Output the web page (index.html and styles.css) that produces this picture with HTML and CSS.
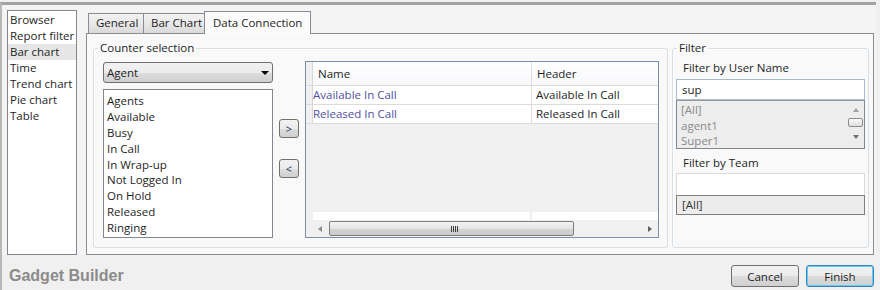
FILE: index.html
```html
<!DOCTYPE html>
<html lang="en">
<head>
    <meta charset="UTF-8">
    <title>Gadget Builder</title>
    <link rel="stylesheet" href="styles.css">
</head>
<body>
    <div class="frame">
        <div class="top">
            <ul class="nav">
                <li>Browser</li>
                <li>Report filter</li>
                <li class="current">Bar chart</li>
                <li>Time</li>
                <li>Trend chart</li>
                <li>Pie chart</li>
                <li>Table</li>
            </ul>
            <div class="tabs">
                <div class="tabstrip">
                    <div class="tab tGeneral">General</div>
                    <div class="tab tBar">Bar Chart</div>
                    <div class="tab tData active">Data Connection</div>
                </div>
                <div class="panel">
                    <fieldset class="group counter">
                        <legend>Counter selection</legend>
                        <div class="counterBody">
                            <div class="pick">
                                <div class="combo">Agent <span class="caret"></span></div>
                                <ul class="listbox">
                                    <li>Agents</li>
                                    <li>Available</li>
                                    <li>Busy</li>
                                    <li>In Call</li>
                                    <li>In Wrap-up</li>
                                    <li>Not Logged In</li>
                                    <li>On Hold</li>
                                    <li>Released</li>
                                    <li>Ringing</li>
                                </ul>
                            </div>
                            <div class="movers">
                                <button class="mv mvAdd">&gt;</button>
                                <button class="mv mvDel">&lt;</button>
                            </div>
                            <div class="grid">
                                <div class="gRow gHead">
                                    <div class="rh"></div>
                                    <div class="c1">Name</div>
                                    <div class="c2">Header</div>
                                </div>
                                <div class="gRow gData">
                                    <div class="rh"></div>
                                    <div class="c1">Available In Call</div>
                                    <div class="c2">Available In Call</div>
                                </div>
                                <div class="gRow gData">
                                    <div class="rh"></div>
                                    <div class="c1">Released In Call</div>
                                    <div class="c2">Released In Call</div>
                                </div>
                                <div class="gEmpty"></div>
                                <div class="gNew">
                                    <div class="c1"></div>
                                    <div class="c2"></div>
                                </div>
                                <div class="hscroll">
                                    <span class="arr arrL"></span>
                                    <div class="thumbTrack">
                                        <div class="hthumb"><span class="grip"></span></div>
                                    </div>
                                    <span class="arr arrR"></span>
                                </div>
                            </div>
                        </div>
                    </fieldset>
                    <fieldset class="group filter">
                        <legend>Filter</legend>
                        <div class="filterBody">
                            <div class="fLabel">Filter by User Name</div>
                            <div class="fInput">sup</div>
                            <div class="fList">
                                <ul>
                                    <li>[All]</li>
                                    <li>agent1</li>
                                    <li>Super1</li>
                                </ul>
                                <div class="vscroll">
                                    <span class="arr arrU"></span>
                                    <span class="vthumb"></span>
                                    <span class="arr arrD"></span>
                                </div>
                            </div>
                            <div class="fLabel fTeam">Filter by Team</div>
                            <div class="fInput fEmpty"></div>
                            <div class="fAll">[All]</div>
                        </div>
                    </fieldset>
                </div>
            </div>
        </div>
        <div class="footer">
            <div class="brand">Gadget Builder</div>
            <div class="actions">
                <button class="btn">Cancel</button>
                <button class="btn btnDefault">Finish</button>
            </div>
        </div>
    </div>
</body>
</html>
```

FILE: styles.css
```css
* {
    box-sizing: border-box;
}
body {
    margin: 0;
    width: 880px;
    height: 290px;
    overflow: hidden;
    background-color: #f0f0f0;
    font-family: "Open Sans", "Noto Sans", sans-serif;
    font-size: 11.5px;
    color: #1e1e1e;
}
ul {
    list-style: none;
    margin: 0;
    padding: 0;
}
.frame {
    width: 876px;
    height: 288px;
    margin-top: 2px;
    border-top: 3px solid #a3a3a3;
    border-left: 2px solid #b8b8b8;
    background-color: #f0f0f0;
    display: flex;
    flex-direction: column;
}
.top {
    display: flex;
    padding: 5px 2px 0 5px;
    background-color: #f4f4f4;
}
.nav {
    width: 70px;
    height: 245px;
    border: 1px solid #828790;
    background-color: #fff;
    padding: 1px 0 0 0;
}
.nav li {
    line-height: 16px;
    height: 16px;
    padding-left: 2px;
    white-space: nowrap;
    overflow: hidden;
}
.nav li.current {
    background-color: #e6e6e6;
}
.tabs {
    margin-left: 9px;
    margin-top: 1px;
    flex: 1;
    display: flex;
    flex-direction: column;
}
.tabstrip {
    display: flex;
    align-items: flex-end;
    height: 22px;
    padding-left: 2px;
}
.tab {
    height: 20px;
    line-height: 18px;
    border: 1px solid #898c95;
    border-bottom: none;
    background: linear-gradient(#f3f3f3, #e8e8e8 50%, #dadada);
    padding-left: 7px;
    margin-right: -1px;
    white-space: nowrap;
    position: relative;
}
.tGeneral { width: 56px; }
.tBar { width: 62px; }
.tData { width: 107px; }
.tab.active {
    height: 23px;
    margin-bottom: -1px;
    background: #fbfbfb;
    z-index: 2;
    line-height: 22px;
    padding-left: 8px;
}
.panel {
    height: 222px;
    border: 1px solid #898c95;
    background-color: #f9f9f9;
    display: flex;
    gap: 4px;
    padding: 6px 4px 0 6px;
}
.group {
    margin: 0;
    padding: 0;
    height: 208px;
    border: 1px solid #d5dfe5;
    border-radius: 3px;
    box-shadow: inset 1px 1px 0 #fff;
}
.group legend {
    margin-left: 4px;
    padding: 0 2px;
    line-height: 16px;
    font-size: 11.5px;
}
.counter {
    width: 575px;
}
.filter {
    width: 197px;
}
.counterBody {
    display: flex;
    padding: 5px 8px 0 9px;
}
.pick {
    width: 170px;
    padding-top: 1px;
}
.combo {
    height: 21px;
    line-height: 19px;
    border: 1px solid #707070;
    border-radius: 3px;
    background: linear-gradient(#f2f2f2, #ebebeb 50%, #dddddd 51%, #cfcfcf);
    padding-left: 3px;
    position: relative;
    margin-bottom: 6px;
}
.caret {
    position: absolute;
    right: 3px;
    top: 8px;
    width: 0;
    height: 0;
    border-left: 4px solid transparent;
    border-right: 4px solid transparent;
    border-top: 4px solid #000;
}
.listbox {
    height: 149px;
    border: 1px solid #828790;
    background-color: #fff;
    padding: 3px 0 0 3px;
}
.listbox li {
    line-height: 15.875px;
    height: 15.875px;
}
.movers {
    width: 20px;
    margin: 0 6px;
    display: flex;
    flex-direction: column;
    padding-top: 58px;
    gap: 21px;
}
.mv {
    width: 20px;
    height: 19px;
    padding: 0;
    border: 1px solid #707070;
    border-radius: 3px;
    background: linear-gradient(#f2f2f2, #ebebeb 50%, #dddddd 51%, #cfcfcf);
    font-family: "Open Sans", sans-serif;
    font-size: 11px;
    color: #1c2d5a;
    line-height: 16px;
}
.grid {
    width: 354px;
    height: 177px;
    border: 1px solid #7a8ea6;
    background-color: #f0f0f0;
    display: flex;
    flex-direction: column;
}
.gRow {
    display: flex;
    border-bottom: 1px solid #dcdcdc;
}
.rh {
    width: 7px;
    border-right: 1px solid #d8d8d8;
    background-color: #f0f0f0;
}
.gRow .c1 {
    width: 219px;
    border-right: 1px solid #dcdcdc;
}
.gRow .c2 {
    flex: 1;
}
.gHead {
    height: 24px;
    line-height: 23px;
    background: linear-gradient(#ffffff, #f7f8fa);
}
.gHead .c1 {
    padding-left: 5px;
}
.gHead .c2 {
    padding-left: 5px;
}
.gData {
    height: 19px;
    line-height: 18px;
    background-color: #fff;
}
.gData .c1 {
    color: #4f4f9d;
    padding-left: 0;
}
.gData .c2 {
    padding-left: 4px;
}
.gEmpty {
    flex: 1;
}
.gNew {
    height: 8px;
    margin-left: 7px;
    display: flex;
}
.gNew .c1 {
    width: 219px;
    background-color: #fff;
    border-right: 2px solid #ececec;
}
.gNew .c2 {
    flex: 1;
    background-color: #fff;
}
.hscroll {
    height: 17px;
    margin-left: 7px;
    display: flex;
    align-items: center;
    background-color: #f0f0f0;
}
.arr {
    width: 0;
    height: 0;
    display: block;
}
.arrL {
    margin: 0 5px 0 5px;
    border-top: 3px solid transparent;
    border-bottom: 3px solid transparent;
    border-right: 4px solid #8c8c8c;
}
.arrR {
    margin: 0 6px 0 5px;
    border-top: 3px solid transparent;
    border-bottom: 3px solid transparent;
    border-left: 4px solid #606060;
}
.thumbTrack {
    flex: 1;
    height: 17px;
    padding: 1px 0;
    margin-left: 2px;
}
.hthumb {
    width: 245px;
    height: 15px;
    border: 1px solid #7e7e7e;
    border-radius: 2px;
    background: linear-gradient(#f4f4f4, #e4e4e4 50%, #d3d3d3 51%, #cbcbcb);
    display: flex;
    justify-content: center;
    align-items: center;
}
.grip {
    width: 7px;
    height: 6px;
    background: repeating-linear-gradient(90deg, #3c3c3c 0 1px, transparent 1px 2px);
    margin-left: 5px;
}
.filterBody {
    padding: 4px 3px 0 3px;
}
.fLabel {
    line-height: 16px;
    padding-left: 7px;
}
.fInput {
    height: 21px;
    margin-top: 3px;
    border: 1px solid #a8bcd0;
    background-color: #fff;
    line-height: 19px;
    padding-left: 5px;
}
.fList {
    height: 49px;
    border: 1px solid #828790;
    border-top-color: #9a9a9a;
    background-color: #ededed;
    display: flex;
    color: #8a8a8a;
}
.fList ul {
    flex: 1;
    padding: 1px 0 0 4px;
}
.fList li {
    line-height: 15.5px;
}
.vscroll {
    width: 17px;
    display: flex;
    flex-direction: column;
    align-items: center;
    padding-top: 7px;
}
.arrU {
    border-left: 3px solid transparent;
    border-right: 3px solid transparent;
    border-bottom: 4px solid #a0a0a0;
}
.vthumb {
    width: 15px;
    height: 9px;
    margin: 6px 0 8px 0;
    border: 1px solid #8c8c8c;
    border-radius: 2px;
    background: linear-gradient(#fafafa, #dedede);
}
.arrD {
    border-left: 3px solid transparent;
    border-right: 3px solid transparent;
    border-top: 4px solid #707070;
}
.fTeam {
    margin-top: 6px;
}
.fEmpty {
    height: 23px;
    margin-top: 2px;
    border-color: #dadada;
}
.fAll {
    height: 20px;
    margin-top: -1px;
    border: 1px solid #7f7f7f;
    background-color: #ececec;
    line-height: 18px;
    padding-left: 5px;
    color: #333;
}
.footer {
    flex: 1;
    display: flex;
    justify-content: space-between;
    align-items: flex-start;
    padding: 10px 2px 0 7px;
}
.brand {
    font-family: "Liberation Sans", Arial, sans-serif;
    font-weight: bold;
    font-size: 16px;
    color: #8b8b8b;
    line-height: 22px;
}
.actions {
    display: flex;
    gap: 7px;
}
.btn {
    width: 68px;
    height: 22px;
    padding: 0;
    border: 1px solid #707070;
    border-radius: 3px;
    background: linear-gradient(#f2f2f2, #ebebeb 50%, #dddddd 51%, #cfcfcf);
    font-family: "Open Sans", sans-serif;
    font-size: 11.5px;
    color: #1e1e1e;
}
.btnDefault {
    border-color: #3c7fb1;
    box-shadow: inset 0 0 0 1px #5fd0f5;
}
```
